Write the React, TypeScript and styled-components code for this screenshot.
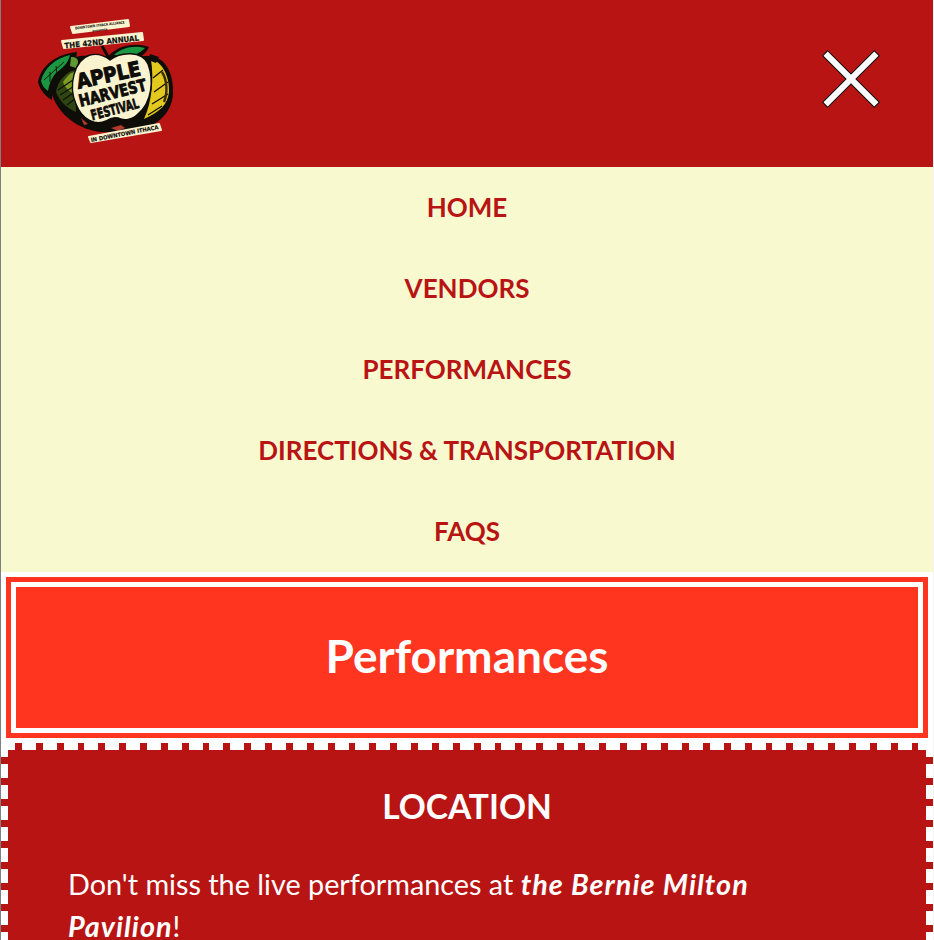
import React from 'react';
import styled, { createGlobalStyle } from 'styled-components';

const GlobalStyle = createGlobalStyle`
  html, body {
    margin: 0;
    padding: 0;
    background: #fff;
  }
  body {
    height: 940px;
    overflow: hidden;
    font-family: "Lato", "Open Sans", sans-serif;
  }
`;

const Page = styled.div`
  width: 932px;
  margin-left: 1px;
  box-shadow: -1px 0 0 #808080, 1px 0 0 #f4f4f4;
  height: 940px;
  overflow: hidden;
  background: #fff;
`;

const Header = styled.header`
  height: 167px;
  background: #b81414;
  display: flex;
  align-items: flex-start;
  justify-content: space-between;
`;

const LogoSvg = styled.svg`
  width: 175px;
  height: 145px;
  margin: 10px 0 0 19px;
  flex: none;
`;

const CloseButton = styled.button`
  border: 0;
  padding: 0;
  background: none;
  width: 60px;
  height: 60px;
  margin: 49px 52px 0 0;
`;

const Nav = styled.nav`
  background: #f9f9d0;
  display: flex;
  flex-direction: column;
`;

const NavLink = styled.a`
  height: 81px;
  box-sizing: border-box;
  padding-bottom: 2px;
  display: flex;
  align-items: center;
  justify-content: center;
  color: #b81414;
  font-size: 26px;
  font-weight: 700;
`;

const Hero = styled.div`
  margin: 5px 5px 0 5px;
  height: 161px;
  box-sizing: border-box;
  border: 5px solid #ff3520;
  background: #fff;
  padding: 5px;
`;

const HeroInner = styled.div`
  height: 100%;
  background: #ff3520;
  display: flex;
  align-items: center;
  justify-content: center;
`;

const HeroTitle = styled.h1`
  margin: 0 0 4px;
  color: #fff;
  font-size: 46px;
  font-weight: 700;
`;

const dash = '#b81414';
const stops = `transparent 0 14px, ${dash} 14px 21px`;

const Ticket = styled.section`
  margin-top: 5px;
  padding: 7px;
  background:
    repeating-linear-gradient(to right, transparent 0 14px, ${dash} 14px 20.85px) top left / 925px 7px no-repeat,
    repeating-linear-gradient(to bottom, ${stops}) top left / 7px 100% no-repeat,
    repeating-linear-gradient(to bottom, ${stops}) top right / 7px 100% no-repeat;
`;

const TicketBody = styled.div`
  background: #b81414;
  color: #fff;
  padding: 33px 60px 40px;
  height: 300px;
`;

const SectionTitle = styled.h2`
  margin: 0 0 34px;
  text-align: center;
  font-size: 33.5px;
  line-height: 46px;
  font-weight: 700;
`;

const Copy = styled.p`
  margin: 0;
  max-width: 770px;
  font-size: 28.8px;
  line-height: 42px;
`;

const Em = styled.em`
  font-weight: 700;
  letter-spacing: 1px;
`;

const logoFont = '"DejaVu Sans", sans-serif';
const ink = '#0f0d08';
const cream = '#faf3d0';

type LogoTextProps = {
  x: number;
  y: number;
  size: number;
  width: number;
  rotate: number;
  heavy?: number;
  children: React.ReactNode;
};

const LogoText = ({ x, y, size, width, rotate, heavy = 0, children }: LogoTextProps) => (
  <text
    x={x}
    y={y}
    fontFamily={logoFont}
    fontSize={size}
    fontWeight={700}
    textAnchor="middle"
    textLength={width}
    lengthAdjust="spacingAndGlyphs"
    fill={ink}
    stroke={heavy ? ink : 'none'}
    strokeWidth={heavy}
    transform={`rotate(${rotate} ${x} ${y})`}
  >
    {children}
  </text>
);

const Logo = () => (
  <LogoSvg viewBox="0 0 175 145" aria-label="Apple Harvest Festival">
    {/* apple halves behind the cut */}
    <path d="M30 74 C30 54 50 44 72 46 L128 46 C148 46 154 68 153 84 C152 104 134 120 112 120 L90 122 C60 124 32 102 30 74Z" fill={ink} />
    <path d="M36 82 C38 70 46 62 55 60 L56 102 C46 98 39 90 36 82Z" fill="#2f4512" />
    <path d="M43 72 C47 66 51 62 55 62 L55 84 C50 82 45 78 43 72Z" fill="#7c9a24" />
    <path d="M38 80 L56 68 M40 85 L56 75 M43 90 L56 81 M47 95 L56 88" stroke={ink} strokeWidth="1.1" />
    <path d="M131 50 C141 50 150 66 149 82 C148 94 140 102 124 109 C132 92 134 68 131 50Z" fill="#e3c81e" />
    <path d="M143 60 L133 68 M148 72 L134 82 M148 84 L132 94 M142 96 L128 105" stroke={ink} strokeWidth="1.3" />
    <path d="M142 62 C147 70 148 82 144 92" stroke="#3a2f0a" strokeWidth="2.4" fill="none" />
    {/* red skin at the bottom */}
    <path d="M91 118 l10 -3 4 3 -7 3Z M61 108 l7 6 -4 1Z" fill="#b23a2a" />
    {/* left leaf */}
    <path d="M18 72 C21 56 36 44 57 42 C56 54 50 60 44 66 C36 72 32 82 32 90 C25 86 20 80 18 72Z" fill={ink} />
    <path d="M21 71 C24 58 36 48 50 45 C48 54 42 58 35 64 C31 69 29 75 28 81 C24 78 22 75 21 71Z" fill="#1c9640" />
    <path d="M24 70 L44 52 M30 62 L30 72 M36 56 L37 64" stroke={ink} strokeWidth="0.9" fill="none" />
    <path d="M51 47 C58 46 60 52 56 58 L50 56Z" fill="#5b9a33" />
    {/* top right leaf */}
    <path d="M88 47 C94 38 112 31 129 37 C127 42 122 47 114 50Z" fill={ink} />
    <path d="M94 45 C102 38 112 35 125 38 C120 43 115 45 108 46Z" fill="#1c9640" />
    {/* stems */}
    <path d="M82 36 L90 50" stroke={ink} strokeWidth="3" />
    <path d="M130 44 l9 3 -3 6 -8 -3Z" fill={ink} />
    {/* cream cut */}
    <path d="M90 50 C100 42 122 40 128 54 C134 70 132 92 118 104 C112 110 104 111 98 108 C94 107 90 108 86 111 C76 116 62 110 56 94 C48 76 54 50 70 45 C78 43 85 46 90 50Z" fill={cream} stroke={ink} strokeWidth="1.4" />
    {/* banners */}
    <path d="M51 17 L108 10 L109 16 L53 23Z" fill={cream} stroke={cream} strokeWidth="2" strokeLinejoin="round" />
    <path d="M42 31 L122 23 L123 30 L44 38Z" fill={cream} stroke={cream} strokeWidth="2" strokeLinejoin="round" />
    <path d="M69 127 L139 114 L141 120 L71 132Z" fill={cream} stroke={cream} strokeWidth="2" strokeLinejoin="round" />
    <LogoText x={80} y={16.5} size={3.6} width={50} rotate={-7}>DOWNTOWN ITHACA ALLIANCE</LogoText>
    <LogoText x={80} y={21} size={3} width={15} rotate={-7}>presents</LogoText>
    <LogoText x={82} y={34.5} size={7.6} width={75} rotate={-6} heavy={0.2}>THE 42ND ANNUAL</LogoText>
    <LogoText x={105} y={125.5} size={5.6} width={69} rotate={-11} heavy={0.15}>IN DOWNTOWN ITHACA</LogoText>
    <LogoText x={90} y={72} size={20.5} width={65} rotate={-12} heavy={1.1}>APPLE</LogoText>
    <LogoText x={94} y={88.5} size={16.5} width={69} rotate={-14} heavy={0.9}>HARVEST</LogoText>
    <LogoText x={96} y={104} size={14} width={49} rotate={-15} heavy={0.8}>FESTIVAL</LogoText>
  </LogoSvg>
);

const CloseIcon = () => (
  <svg width="60" height="60" viewBox="0 0 60 60">
    <path d="M3.8 3.8 L56.2 56.2 M56.2 3.8 L3.8 56.2" stroke="#111" strokeWidth="8" />
    <path d="M4.6 4.6 L55.4 55.4 M55.4 4.6 L4.6 55.4" stroke="#fff" strokeWidth="6" />
  </svg>
);

const links = ['HOME', 'VENDORS', 'PERFORMANCES', 'DIRECTIONS & TRANSPORTATION', 'FAQS'];

export default function App() {
  return (
    <Page>
      <GlobalStyle />
      <Header>
        <Logo />
        <CloseButton aria-label="Close menu">
          <CloseIcon />
        </CloseButton>
      </Header>
      <Nav>
        {links.map((link) => (
          <NavLink key={link}>{link}</NavLink>
        ))}
      </Nav>
      <Hero>
        <HeroInner>
          <HeroTitle>Performances</HeroTitle>
        </HeroInner>
      </Hero>
      <Ticket>
        <TicketBody>
          <SectionTitle>LOCATION</SectionTitle>
          <Copy>
            Don't miss the live performances at <Em>the Bernie Milton Pavilion</Em>!
          </Copy>
        </TicketBody>
      </Ticket>
    </Page>
  );
}
